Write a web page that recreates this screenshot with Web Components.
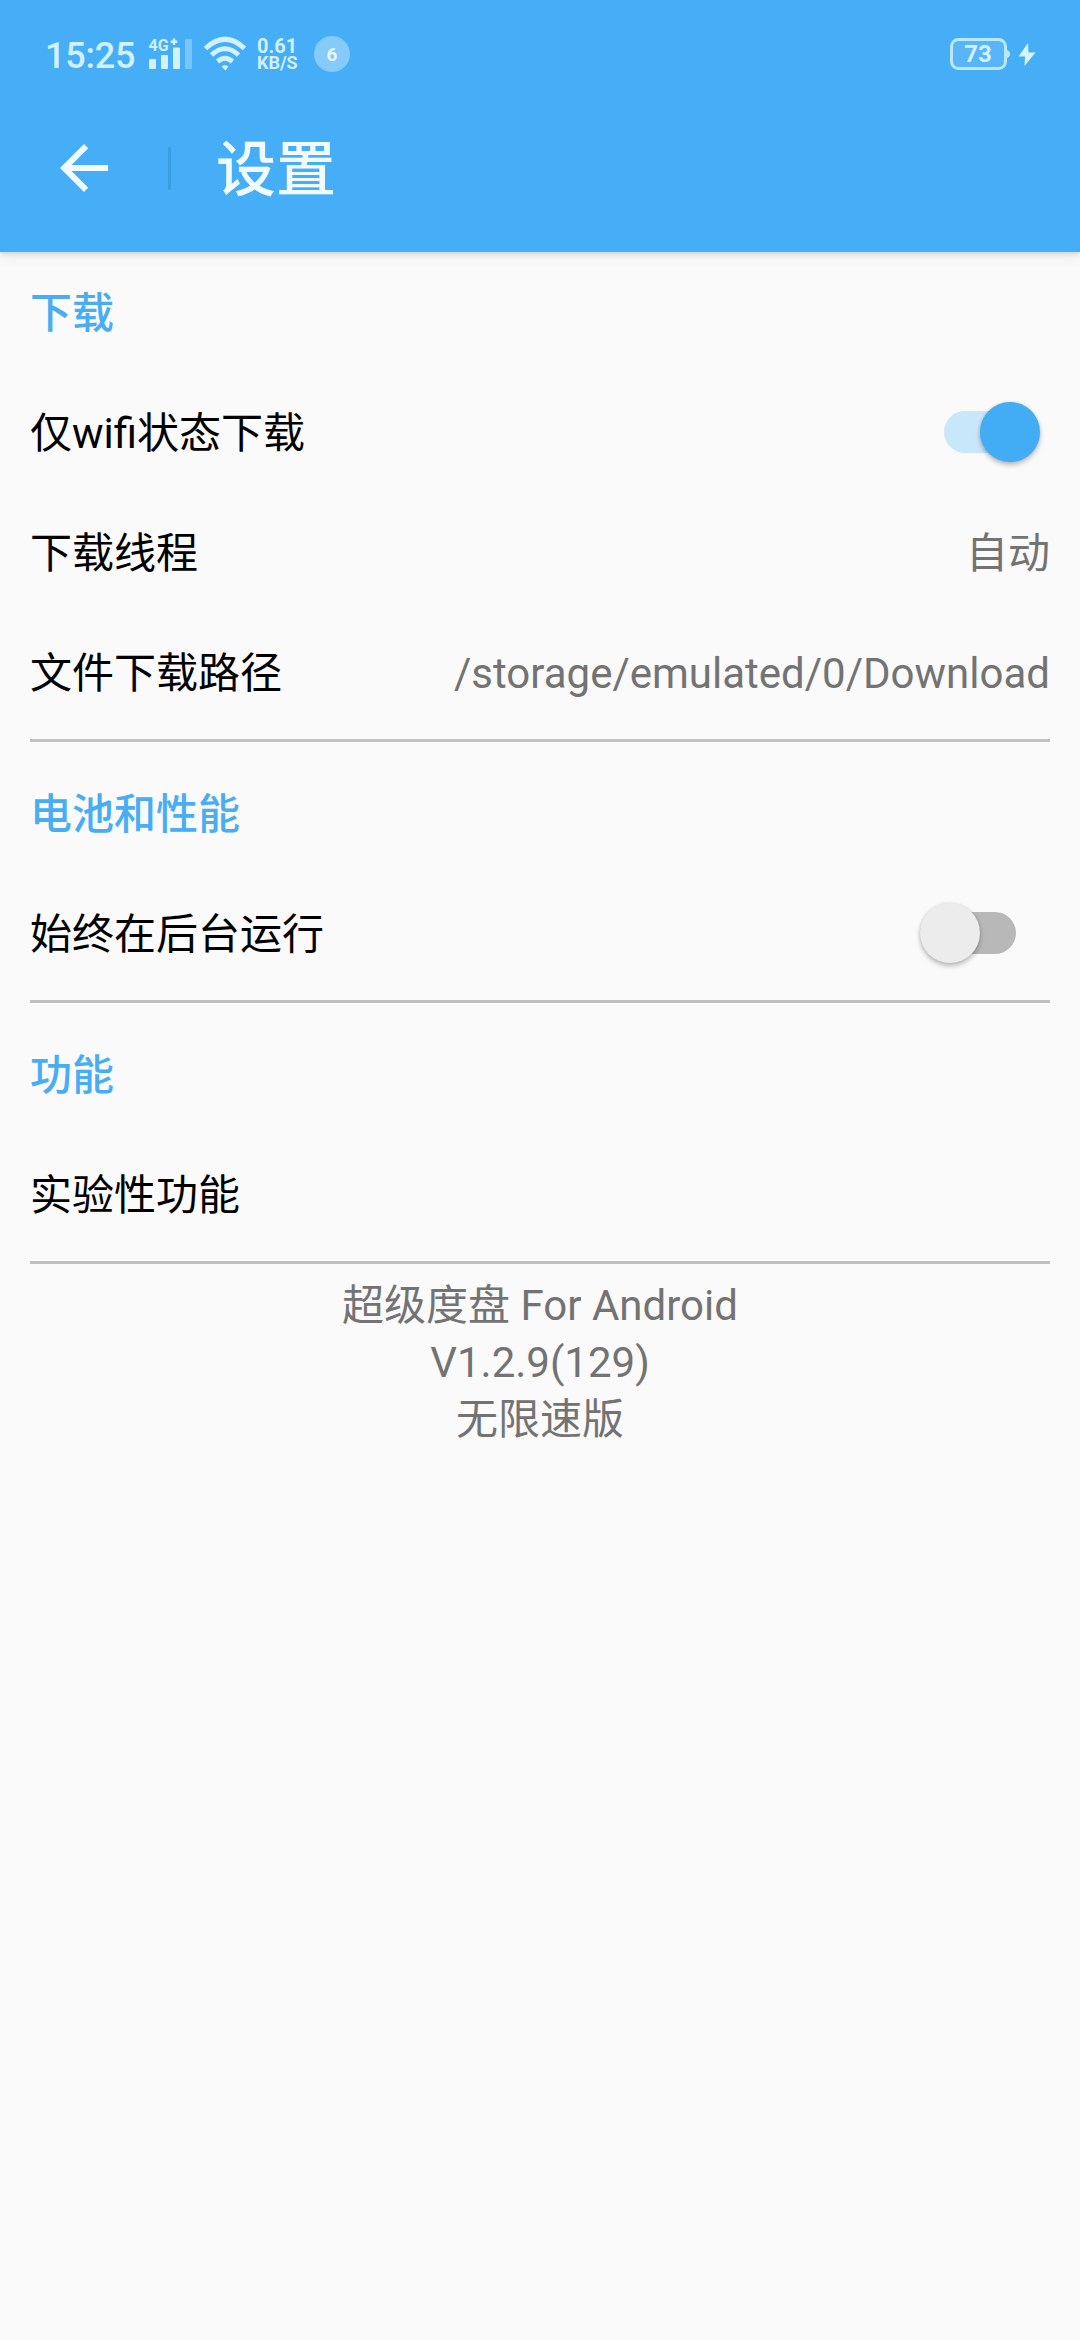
<!DOCTYPE html>
<html lang="zh-CN">
<head>
<meta charset="utf-8">
<title>设置</title>
<style>
html,body{margin:0;padding:0}
body{width:1080px;height:2340px;overflow:hidden;background:#fafafa;font-family:Roboto,"Noto Sans CJK SC",sans-serif;font-size:42px;color:#000}
</style>
</head>
<body>
<settings-page></settings-page>
<script>
const define = (name, html) => customElements.define(name, class extends HTMLElement {
  constructor() {
    super();
    this.attachShadow({ mode: 'open' }).innerHTML = html;
  }
});

define('status-bar', `
<style>
:host{display:flex;height:84px;box-sizing:border-box;padding:24px 44px 0 45px;align-items:flex-start;color:#d2f0ff}
svg{display:block;flex:none}
text{font-family:Roboto,sans-serif;fill:#d2f0ff}
.time{font-size:36px;line-height:64px;font-weight:500;width:103px;flex:none;letter-spacing:-.2px}
.speed{font-size:20px;line-height:17px;font-weight:700;margin:14px 0 0 7px;width:57px;flex:none}
.speed div{white-space:nowrap}
.speed div + div{font-size:18px;line-height:16px}
.count{width:36px;height:36px;border-radius:50%;background:#86caf9;font-size:19px;font-weight:700;line-height:38px;text-align:center;margin-top:12px;color:#e4f8ff}
.gap{flex:1}
</style>
<div class="time">15:25</div>
<svg width="46" height="60" viewBox="148 24 46 60">
  <text x="148.5" y="51" font-size="17" font-weight="700" textLength="20" lengthAdjust="spacingAndGlyphs">4G</text>
  <path d="M174 38.500v6.500M170.700 41.700h6.600" stroke="#d2f0ff" stroke-width="2.4"/>
  <g fill="#d2f0ff"><rect x="149" y="59" width="7" height="10" rx="1"/><rect x="161" y="55" width="7" height="14" rx="1"/><rect x="173" y="47.500" width="7" height="21.500" rx="1"/></g>
  <rect x="185" y="39" width="7" height="30" rx="1" fill="#79c4f9"/>
</svg>
<svg width="56" height="60" viewBox="194 24 56 60" fill="none" stroke="#d2f0ff" stroke-width="5">
  <path d="M205.500 48.500Q225 30 244.500 48.500"/><path d="M211.500 55Q225 42.500 238.500 55"/><path d="M217.500 61.500Q225 55 232.500 61.500"/>
  <path d="M221.500 66.500Q225 64 228.500 66.500L225.500 70.500Z" fill="#d2f0ff" stroke="none"/>
</svg>
<div class="speed"><div>0.61</div><div>KB/S</div></div>
<div class="count">6</div>
<div class="gap"></div>
<svg width="90" height="60" viewBox="946 24 90 60">
  <rect x="951.500" y="39.500" width="54" height="29" rx="7" fill="#58b5f7" stroke="#bce8ff" stroke-width="3"/>
  <path d="M1007 50q3 1 3 4t-3 4z" fill="#bce8ff"/>
  <text x="978" y="62.300" font-size="24" font-weight="700" text-anchor="middle">73</text>
  <path d="M1028 43L1018.500 56.500H1025L1024.500 66L1035.500 52.500H1028.500Z" fill="#d8f3ff"/>
</svg>`);

define('title-bar', `
<style>
:host{display:flex;align-items:center;height:168px;padding-left:48px;color:#f1fbff}
svg{display:block;width:72px;height:72px;fill:#f1fbff}
i{width:3px;height:43px;background:#3b9fe3;margin:0 45px 0 48px}
h1{margin:0;padding-top:5px;font-size:60px;line-height:84px;font-weight:500}
</style>
<svg viewBox="0 0 24 24"><path d="M20 11H7.830l5.590-5.590L12 4l-8 8 8 8 1.410-1.410L7.830 13H20v-2z"/></svg>
<i></i><h1><slot></slot></h1>`);

define('toggle-switch', `
<style>
:host{display:flex;align-items:center;width:72px;height:42px;border-radius:21px;background:#b8b8b8;margin-right:34px}
:host([checked]){background:#c9e7fb;justify-content:flex-end}
span{flex:none;width:60px;height:60px;border-radius:50%;background:#ececec;margin-left:-24px;box-shadow:0 3px 5px rgba(0,0,0,.25),0 0 3px rgba(0,0,0,.1)}
:host([checked]) span{background:#42acf5;margin:0 -24px 0 0}
</style><span></span>`);

define('settings-row', `
<style>
:host{display:flex;align-items:center;justify-content:space-between;height:120px;line-height:60px}
.label,.value{padding-top:4px}
.value{color:#737373}
</style>
<span class="label"><slot></slot></span><span class="value"><slot name="value"></slot></span><slot name="control"></slot>`);

define('settings-section', `
<style>
:host{display:block;padding:0 30px}
h2{box-sizing:border-box;margin:0;padding-top:4px;height:120px;display:flex;align-items:center;font-size:42px;line-height:60px;font-weight:500;color:#48aef1}
hr{margin:7px 0 11px;border:0;height:3px;background:#c0c0c0}
</style>
<h2></h2><slot></slot><hr>`);

customElements.define('settings-page', class extends HTMLElement {
  constructor() {
    super();
    const root = this.attachShadow({ mode: 'open' });
    root.innerHTML = `
<style>
:host{display:block}
header{background:#45aef7;height:252px;box-shadow:0 2px 4px rgba(0,0,0,.1),0 4px 12px rgba(0,0,0,.08)}
footer{color:#737373;text-align:center;line-height:57px;padding-top:2px}
</style>
<header><status-bar></status-bar><title-bar>设置</title-bar></header>
<main>
<settings-section heading="下载">
  <settings-row>仅wifi状态下载<toggle-switch slot="control" checked></toggle-switch></settings-row>
  <settings-row>下载线程<span slot="value">自动</span></settings-row>
  <settings-row>文件下载路径<span slot="value">/storage/emulated/0/Download</span></settings-row>
</settings-section>
<settings-section heading="电池和性能">
  <settings-row>始终在后台运行<toggle-switch slot="control"></toggle-switch></settings-row>
</settings-section>
<settings-section heading="功能"><settings-row>实验性功能</settings-row></settings-section>
</main>
<footer><div>超级度盘 For Android</div><div>V1.2.9(129)</div><div>无限速版</div></footer>`;
    root.querySelectorAll('settings-section').forEach(section => {
      section.shadowRoot.querySelector('h2').textContent = section.getAttribute('heading');
    });
  }
});
</script>
</body>
</html>
